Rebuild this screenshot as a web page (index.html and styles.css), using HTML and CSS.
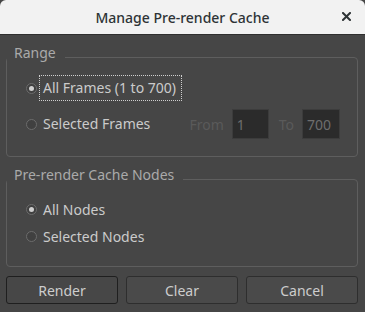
FILE: index.html
```html
<!DOCTYPE html>
<html lang="en">

<head>
    <meta charset="UTF-8">
    <meta name="viewport" content="width=device-width, initial-scale=1.0">
    <title>Manage Pre-render Cache</title>
    <link rel="stylesheet" href="styles.css">
</head>

<body>

    <div class="dialog">
        <div class="titlebar">
            <div class="title">Manage Pre-render Cache</div>
            <button class="close" aria-label="Close">
                <svg width="9" height="9" viewBox="0 0 9 9">
                    <path d="M1 1 L8 8 M8 1 L1 8" stroke="#2e3436" stroke-width="2" stroke-linecap="square" />
                </svg>
            </button>
        </div>

        <div class="content">
            <fieldset class="group groupRange">
                <legend>Range</legend>
                <div class="row">
                    <label class="radio focused">
                        <span class="dot checked"></span>
                        <span class="text">All Frames (1 to 700)</span>
                    </label>
                </div>
                <div class="row">
                    <label class="radio">
                        <span class="dot"></span>
                        <span class="text">Selected Frames</span>
                    </label>
                    <div class="frames">
                        <span class="disabled">From</span>
                        <input class="field" type="text" value="1" disabled>
                        <span class="disabled">To</span>
                        <input class="field" type="text" value="700" disabled>
                    </div>
                </div>
            </fieldset>

            <fieldset class="group groupNodes">
                <legend>Pre-render Cache Nodes</legend>
                <div class="row small">
                    <label class="radio">
                        <span class="dot checked"></span>
                        <span class="text">All Nodes</span>
                    </label>
                </div>
                <div class="row small">
                    <label class="radio">
                        <span class="dot"></span>
                        <span class="text">Selected Nodes</span>
                    </label>
                </div>
            </fieldset>

            <div class="buttons">
                <button class="button buttonDefault">Render</button>
                <button class="button">Clear</button>
                <button class="button">Cancel</button>
            </div>
        </div>
    </div>

</body>

</html>
```

FILE: styles.css
```css
body {
    margin: 0;
    background: #464646;
    font-family: 'Noto Sans', sans-serif;
    font-size: 14px;
    color: #cbcbcb;
}

.dialog {
    width: 365px;
    height: 312px;
    overflow: hidden;
}

.titlebar {
    height: 34px;
    background: #f2f2f2;
    border-bottom: 1px solid #2f2f2f;
    border-radius: 6px 6px 0 0;
    display: flex;
    align-items: center;
    justify-content: center;
    position: relative;
}

.title {
    font-size: 14px;
    font-weight: 500;
    color: #2e3436;
}

.close {
    position: absolute;
    right: 14px;
    top: 12px;
    width: 9px;
    height: 9px;
    padding: 0;
    border: 0;
    background: none;
    display: flex;
}

.content {
    padding: 8px 7px 0 6px;
}

.group {
    margin: 0;
    border: 1px solid #5e5e5e;
    border-radius: 4px;
    padding: 0 17px 0 19px;
}

/* legend text sits a little above the frame line */
.group legend {
    margin-left: -19px;
    padding: 1px 9px 9px 7px;
    font-size: 14px;
    line-height: 18px;
    color: #aaaaaa;
}

.groupRange {
    padding-top: 2px;
    padding-bottom: 17px;
    display: flex;
    flex-direction: column;
    gap: 6px;
}

.groupNodes {
    margin-top: 8px;
    padding-top: 3px;
    padding-bottom: 16px;
}

.row {
    height: 30px;
    display: flex;
    align-items: center;
    justify-content: space-between;
}

.row.small {
    height: 27px;
}

.radio {
    display: flex;
    align-items: center;
    gap: 6px;
}

.dot {
    width: 11px;
    height: 11px;
    box-sizing: border-box;
    border: 1px solid #6c6c6c;
    border-radius: 50%;
    background: #404040;
    display: flex;
    align-items: center;
    justify-content: center;
}

.dot.checked::after {
    content: "";
    width: 5px;
    height: 5px;
    border-radius: 50%;
    background: #cfcfcf;
}

.text {
    padding: 3px 3px;
    line-height: 16px;
    margin-left: -3px;
}

.focused .text {
    outline: 1px dotted #cfcfcf;
    padding: 4px 5px 4px 3px;
}

.frames {
    display: flex;
    align-items: center;
}

.disabled {
    color: #5a5a5a;
}

.field {
    width: 37px;
    height: 30px;
    box-sizing: border-box;
    margin: 0 10px 0 8px;
    padding: 0 4px;
    border: 1px solid #3c3c3c;
    background: #2b2b2b;
    color: #6e6e6e;
    font-family: 'Noto Sans', sans-serif;
    font-size: 14px;
}

.field:last-child {
    width: 38px;
    margin-right: 0;
}

.buttons {
    margin-top: 9px;
    display: grid;
    grid-template-columns: 1fr 1fr 1fr;
    gap: 8px;
}

.button {
    height: 28px;
    border: 1px solid #2e2e2e;
    border-radius: 3px;
    background: #4a4a4a;
    color: #cdcdcd;
    font-family: 'Noto Sans', sans-serif;
    font-size: 14px;
}

.buttonDefault {
    border-color: #1f1f1f;
    background: #474747;
}
```
